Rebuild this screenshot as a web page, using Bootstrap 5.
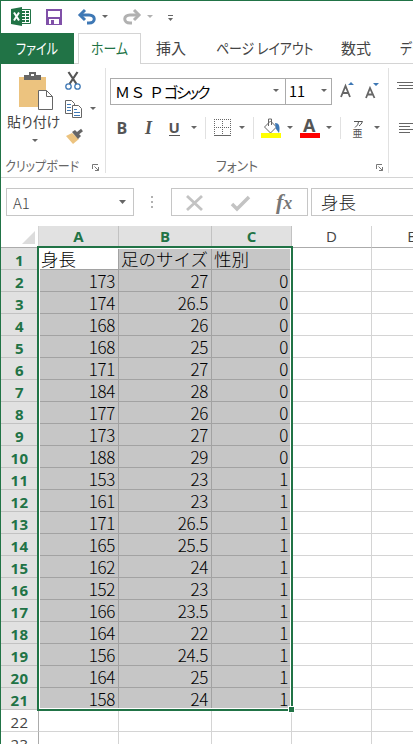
<!DOCTYPE html>
<html lang="ja">
<head>
<meta charset="utf-8">
<meta name="viewport" content="width=device-width, initial-scale=1">
<title>Excel</title>
<link href="https://cdn.jsdelivr.net/npm/bootstrap@5.3.0/dist/css/bootstrap.min.css" rel="stylesheet">
<style>
:root{--xl:#217346}
body{width:413px;height:744px;overflow:hidden;background:#fff;color:#444;font:14px/1 "Noto Sans CJK JP",sans-serif;}
svg{display:block;flex:none}
.win{width:413px;height:744px;overflow:hidden;border-left:1px solid var(--xl);border-top:1px solid var(--xl)}
.jp{display:inline-block;white-space:nowrap;font-feature-settings:"palt";transform-origin:0 50%;line-height:1;flex:none}
.titlebar{height:32px}
.tabs{height:31px}
.tab{height:31px;border-bottom:1px solid #d4d4d4;flex:none;padding-top:7px;font-size:15px}
.tab-file{width:73px;background:var(--xl);color:#fff;border-color:var(--xl);padding-left:15px;height:31px}
.tab-gap{width:4px}
.tab-home{width:63px;border:1px solid #d4d4d4;border-bottom:0;color:var(--xl);padding-left:12px;padding-top:6px}
.tab-insert{width:75px;padding-left:15px}
.tab-page{width:125px;padding-left:24px}
.tab-formula{width:59px;padding-left:24px}
.tab-data{width:90px;padding-left:23px}
.s-file{transform:scaleX(.81)}.s-home{transform:scaleX(.86)}.s-page{transform:scaleX(.86)}
.ribbon{height:114px;border-bottom:1px solid #d4d4d4}
.grp{border-right:1px solid #e1e1e1;height:105px;margin-top:4px;flex:none}
.grp-clip{width:105px}.grp-font{width:283px}
.grp-name{color:#666;font-size:13.5px}
.paste{width:59px}
.paste-label{padding-left:6px}
.combo{height:27px;border:1px solid #ababab;color:#000;font-size:15px}
.combo-name{width:176px}.combo-size{width:47px;margin-left:-1px;font-size:14.5px}
.fbar{height:48px;padding:10px 0 0 5px}
.fbox{height:28px;border:1px solid #c6c6c6;flex:none}
.fbox-value{width:120px;margin-left:3px;padding:4px 0 0 9px;font-size:17.5px;font-weight:300;color:#222}
.sheet{display:grid;grid-template-columns:38px 80px 93px 80px 80px 80px;grid-auto-rows:22px;width:451px;position:relative;color:#000}
.sheet>div{border-right:1px solid #d4d4d4;border-bottom:1px solid #d4d4d4;white-space:nowrap}
.sheet>.ch,.sheet>.rh{font-family:"Open Sans","Noto Sans",sans-serif;font-size:15px;line-height:21px;color:#444;text-align:center}
.sheet>.ch{border-bottom-color:#ababab}
.sheet>.rh{border-right-color:#ababab;line-height:24px;letter-spacing:.3px}
.sheet>.hot{background:#e1e1e1;color:var(--xl);font-weight:700;border-color:#c2c2c2}
.sheet>.num,.sheet>.txt{font-size:17px;line-height:21px;font-weight:300}
.sheet>.num{text-align:right;padding-right:3px;letter-spacing:-.35px}
.sheet>.txt{padding-left:2px;font-size:17.5px;line-height:22px}
.sheet>.sel{background:#c6c6c6;border-color:#a2a2a2}
.sheet>.act{background:#fff}
.sheet>.frame{position:absolute;left:36px;top:20px;width:256px;height:465px;border:2px solid var(--xl);box-shadow:inset 0 0 0 1px #fff}
.sheet>.grip{position:absolute;left:287px;top:480px;width:7px;height:7px;background:var(--xl);border:1px solid #fff}
</style>
<script src="https://cdn.jsdelivr.net/npm/bootstrap@5.3.0/dist/js/bootstrap.bundle.min.js"></script>
</head>
<body>
<div class="win d-flex flex-column">
  <div class="titlebar flex-shrink-0">
    <svg width="190" height="32" viewBox="1 1 190 32">
      <path d="M20.500 9.500h10v14h-10z" fill="#fff" stroke="#217346"/><path d="M22 12h3m1 0h3m-7 3h3m1 0h3m-7 3h3m1 0h3m-7 3h3m1 0h3" stroke="#217346" stroke-width="2"/>
      <path d="M11 9l11-2v19l-11-2z" fill="#217346"/><path d="M14 12.500l5 8m0-8l-5 8" stroke="#fff" stroke-width="2"/>
      <path d="M47 10h14v14H47z" fill="#fff" stroke="#8050a8" stroke-width="2"/><path d="M46 17h16v8H46z" fill="#8050a8"/><path d="M49 19h10v5H49z" fill="#fff"/><path d="M51 20h3v4h-3z" fill="#8050a8"/>
      <path d="M81 15h8c7 0 7 8 0 8h-2" fill="none" stroke="#3e78b5" stroke-width="3"/><path d="M85 10l-5 5 5 5" fill="none" stroke="#3e78b5" stroke-width="3"/>
      <path d="M102 15h6l-3 3z" fill="#666"/>
      <path d="M138 15h-8c-7 0-7 8 0 8h2" fill="none" stroke="#b1b1b1" stroke-width="3"/><path d="M134 10l5 5-5 5" fill="none" stroke="#b1b1b1" stroke-width="3"/>
      <path d="M147 15h6l-3 3z" fill="#b1b1b1"/><path d="M168 15.500h5" stroke="#666"/><path d="M168 18h5l-2.500 3z" fill="#666"/>
    </svg>
  </div>
  <div class="tabs d-flex flex-shrink-0">
    <div class="tab tab-file"><span class="jp s-file">ファイル</span></div>
    <div class="tab tab-gap"></div>
    <div class="tab tab-home"><span class="jp s-home">ホーム</span></div>
    <div class="tab tab-insert"><span class="jp">挿入</span></div>
    <div class="tab tab-page ps-0"><span class="jp s-page">ページ レイアウト</span></div>
    <div class="tab tab-formula ps-0"><span class="jp">数式</span></div>
    <div class="tab tab-data ps-0"><span class="jp s-home">データ</span></div>
  </div>
  <div class="ribbon d-flex flex-shrink-0">
    <div class="grp grp-clip d-flex flex-column">
      <div class="d-flex">
        <div class="paste">
          <svg width="59" height="46" viewBox="1 68 59 46"><path d="M19 77h27v30H19z" fill="#ecc37f"/><path d="M24 75h5v-3h7v3h5v5H24z" fill="#666"/><path d="M31 74h3v2h-3z" fill="#fff"/><path d="M38.500 90.500h8l6 6v13h-14z" fill="#fff" stroke="#666"/><path d="M46.500 90.500v6h6" fill="none" stroke="#666"/></svg>
          <div class="paste-label"><span class="jp">貼り付け</span></div>
          <svg width="59" height="16" viewBox="1 128 59 16"><path d="M32 139h6l-3 3z" fill="#666"/></svg>
        </div>
        <svg width="45" height="85" viewBox="60 68 45 85">
          <path d="M68.500 72l8 12m1-12l-8 12" fill="none" stroke="#555" stroke-width="2.200"/><g fill="#fff" stroke="#3e78b5" stroke-width="1.300"><circle cx="68.500" cy="86.500" r="2.700"/><circle cx="77.500" cy="86.500" r="2.700"/></g>
          <g fill="#fff" stroke="#666"><path d="M65.500 100.500h6l3 3v10h-9z"/><path d="M72.500 105.500h6l3 3v9h-9z"/></g><path d="M67 104.500h4m-4 3h4m-4 3h4M74 109.500h3m-3 3h6m-6 3h6" stroke="#3e78b5"/>
          <path d="M90 107h6l-3 3z" fill="#666"/>
          <path d="M66 136l6-3 7 6-6 5z" fill="#ecc37f"/><path d="M72 132l3-2 6 6-3 3z" fill="#666"/><path d="M77 134l5-4" stroke="#666" stroke-width="3"/>
        </svg>
      </div>
      <div class="grp-name d-flex ps-1" style="padding-top:6px"><span class="jp" style="transform:scaleX(.89);width:86px">クリップボード</span>
        <svg class="mt-1" width="9" height="9" viewBox="0 0 9 9"><path d="M1.500 6V1.500H7M3.500 3.500l4 4M7.500 4v3.500H4" fill="none" stroke="#777"/></svg></div>
    </div>
    <div class="grp grp-font d-flex flex-column">
      <div class="d-flex" style="padding:10px 0 0 4px">
        <div class="combo combo-name d-flex align-items-center ps-1"><span class="jp" style="width:158px;font-feature-settings:normal"><span style="letter-spacing:.2px">ＭＳ Ｐ</span><span style="font-feature-settings:'palt';letter-spacing:-2.3px">ゴシック</span></span><svg width="8" height="5"><path d="M0 0h6L3 3z" fill="#666"/></svg></div>
        <div class="combo combo-size d-flex align-items-center" style="padding-left:3px"><span class="jp" style="width:32px">11</span><svg width="8" height="5"><path d="M0 0h6L3 3z" fill="#666"/></svg></div>
        <svg width="50" height="27" viewBox="332 78 50 27"><path d="M341 97l4.500-11 4.500 11m-7.500-4h6M366 98l4-10 4.500 10m-7-3.500h6" fill="none" stroke="#666" stroke-width="1.800"/><path d="M348 85l3-3 3 3zM373 83h6l-3 3z" fill="#3e78b5"/></svg>
      </div>
      <svg width="280" height="48" viewBox="106 105 280 48">
        <g fill="#555" font-family="Open Sans" font-weight="700"><text x="116.500" y="133.500" font-size="16">B</text><text x="145" y="133.500" font-family="Liberation Serif" font-style="italic" font-size="18">I</text><text x="168.500" y="132.500" font-size="15">U</text><text x="303" y="132" font-size="18">A</text></g>
        <path d="M169 135.500h11" stroke="#555"/>
        <path d="M191 126h6l-3 3zM239 126h6l-3 3zM287 126h6l-3 3zM326 126h6l-3 3zM374 126h6l-3 3z" fill="#666"/>
        <path d="M205.500 117v22M253.500 117v22M340.500 117v22" stroke="#e1e1e1"/>
        <path d="M214 119.500h17M214.500 119v16M222.500 119v16M230.500 119v16M214 127.500h17" stroke="#666" stroke-dasharray="1 1"/><path d="M214 135.500h17" stroke="#666"/>
        <path d="M264.500 127l6-6 6 6-6 6zM268.500 126v-7h3v6" fill="#fff" stroke="#666"/><path d="M275 123c5 0 5 5 4 10l-3-4z" fill="#3e78b5"/><path d="M261 133h20v5h-20z" fill="#ff0"/><path d="M300 133h20v5h-20z" fill="red"/>
        <path d="M354 121.500h8.500q-1 3-3.500 4.500M358.500 122q0 3-3.500 5.500" fill="none" stroke="#555"/>
        <text x="352.500" y="137" font-size="10" fill="#555">亜</text>
      </svg>
      <div class="grp-name d-flex" style="padding:6px 0 0 110px"><span class="jp" style="width:159px;transform:scaleX(.95)">フォント</span>
        <svg class="mt-1" width="9" height="9" viewBox="0 0 9 9"><path d="M1.500 6V1.500H7M3.500 3.500l4 4M7.500 4v3.500H4" fill="none" stroke="#777"/></svg></div>
    </div>
    <svg width="24" height="110" viewBox="389 64 24 110"><path d="M397 82.500h16M399 85.500h14M397 88.500h16M399 123.500h14M399 126.500h11M399 129.500h14M399 132.500h11" stroke="#666"/></svg>
  </div>
  <div class="fbar d-flex flex-shrink-0">
    <div class="fbox d-flex align-items-center" style="width:128px;padding-left:6px;font-size:15px"><span class="jp fw-light" style="width:106px">A1</span><svg width="8" height="5"><path d="M0 0h7L3.500 4z" fill="#666"/></svg></div>
    <svg width="37" height="28" viewBox="134 188 37 28"><path d="M151 196h2v2h-2zM151 201h2v2h-2zM151 206h2v2h-2z" fill="#b1b1b1"/></svg>
    <div class="fbox" style="width:137px"><svg width="135" height="26" viewBox="172 189 135 26"><path d="M187 196l15 14m0-14l-15 14" stroke="#c3c3c3" stroke-width="2.800"/><path d="M232 204l5 5 12-12" fill="none" stroke="#c3c3c3" stroke-width="3.500"/><text x="276" y="209" font-family="Liberation Serif" font-style="italic" font-weight="700" font-size="22" fill="#777">f<tspan font-size="18" dx="0">x</tspan></text></svg></div>
    <div class="fbox fbox-value">身長</div>
  </div>
  <div class="sheet flex-shrink-0" id="sheet"></div>
</div>
<script>
const rows=[[173,27,0],[174,26.5,0],[168,26,0],[168,25,0],[171,27,0],[184,28,0],[177,26,0],[173,27,0],[188,29,0],[153,23,1],[161,23,1],[171,26.5,1],[165,25.5,1],[162,24,1],[152,23,1],[166,23.5,1],[164,22,1],[156,24.5,1],[164,25,1],[158,24,1]];
let h='<div class="ch"><svg width="37" height="21"><path d="M34 5v13H21z" fill="#dcdcdc"/></svg></div>';
for(const c of 'ABCDE')h+=`<div class="ch ${c<'D'?'hot':''}">${c}</div>`;
h+='<div class="rh hot">1</div><div class="txt sel act">身長</div><div class="txt sel">足のサイズ</div><div class="txt sel">性別</div><div></div><div></div>';
rows.forEach((r,i)=>{h+=`<div class="rh hot">${i+2}</div>`+r.map(v=>`<div class="num sel">${v}</div>`).join('')+'<div></div><div></div>';});
for(const n of [22,23])h+=`<div class="rh">${n}</div>`+'<div></div>'.repeat(5);
document.getElementById('sheet').innerHTML=h+'<div class="frame"></div><div class="grip"></div>';
</script>
</body>
</html>
